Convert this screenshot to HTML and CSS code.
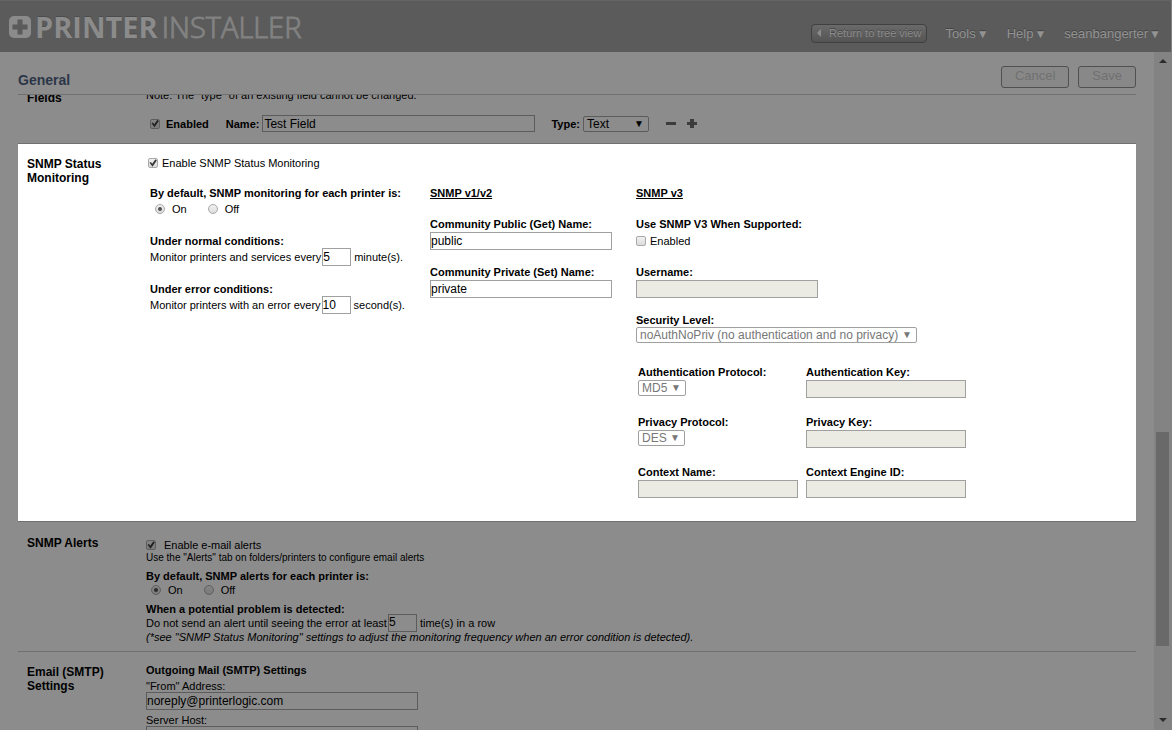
FILE: index.html
```html
<!DOCTYPE html>
<html lang="en">
<head>
<meta charset="utf-8">
<title>Printer Installer - General</title>
<link rel="stylesheet" href="styles.css">
</head>
<body>
<header class="topbar">
  <div class="logo">
    <svg class="logo-mark" viewBox="0 0 22 22" aria-hidden="true">
      <rect width="22" height="22" rx="5" fill="#8b8b8b"/>
      <path d="M8.5 3.5h5v5h5v5h-5v5h-5v-5h-5v-5h5z" fill="#5b5b5b"/>
    </svg>
    <span class="logo-text"><b>PRINTER</b><span class="logo-light">INSTALLER</span></span>
  </div>
  <nav class="topnav">
    <button class="tree-btn" type="button">
      <svg class="back-icon" viewBox="0 0 4 8" aria-hidden="true"><path d="M4 0v8L0 4z" fill="#8c8c8c"/></svg>
      Return to tree view
    </button>
    <a class="menu" href="#">Tools <i>▼</i></a>
    <a class="menu" href="#">Help <i>▼</i></a>
    <a class="menu" href="#">seanbangerter <i>▼</i></a>
  </nav>
</header>
<div class="page">
  <main class="main">
    <div class="page-head">
      <h1>General</h1>
      <div class="actions">
        <button class="action" type="button" disabled>Cancel</button>
        <button class="action" type="button" disabled>Save</button>
      </div>
    </div>
    <div class="sections">
      <section class="section fields">
        <h2>Fields</h2>
        <div class="content">
          <p>Note: The "type" of an existing field cannot be changed.</p>
          <div class="field-row">
            <label class="enabled"><input type="checkbox" checked>Enabled</label>
            <label for="fname">Name:</label>
            <input class="text name-input" id="fname" type="text" value="Test Field">
            <label class="type-label" for="ftype">Type:</label>
            <span class="select type-select"><select id="ftype"><option>Text</option></select><i>▼</i></span>
            <button class="icon-btn minus" type="button" aria-label="Remove field"><svg viewBox="0 0 10 10"><path d="M0 3h10v3H0z" fill="#3c3c3c"/></svg></button>
            <button class="icon-btn" type="button" aria-label="Add field"><svg viewBox="0 0 10 10"><path d="M3 0h4v3h3v3H7v3H3V6H0V3h3z" fill="#3c3c3c"/></svg></button>
          </div>
        </div>
      </section>

      <section class="section status">
        <h2>SNMP Status Monitoring</h2>
        <div class="content">
          <label class="check status-check"><input type="checkbox" checked>Enable SNMP Status Monitoring</label>
          <div class="columns">
            <div class="col">
              <h3>By default, SNMP monitoring for each printer is:</h3>
              <div class="radios">
                <label><input type="radio" name="mon" checked>On</label>
                <label><input type="radio" name="mon">Off</label>
              </div>
              <div class="interval">
                <h3>Under normal conditions:</h3>
                <div class="inline"><label for="norm">Monitor printers and services every</label><input class="text num" id="norm" type="text" value="5"><span>minute(s).</span></div>
              </div>
              <div class="interval">
                <h3>Under error conditions:</h3>
                <div class="inline"><label for="err">Monitor printers with an error every</label><input class="text num" id="err" type="text" value="10"><span>second(s).</span></div>
              </div>
            </div>
            <div class="col stack">
              <h3 class="under">SNMP v1/v2</h3>
              <div class="field"><label for="get">Community Public (Get) Name:</label><input class="text mid" id="get" type="text" value="public"></div>
              <div class="field"><label for="set">Community Private (Set) Name:</label><input class="text mid" id="set" type="text" value="private"></div>
            </div>
            <div class="col stack">
              <h3 class="under">SNMP v3</h3>
              <div class="field">
                <h3>Use SNMP V3 When Supported:</h3>
                <label class="check v3-check"><input type="checkbox">Enabled</label>
              </div>
              <div class="field"><label for="user">Username:</label><input class="text mid" id="user" type="text" disabled></div>
              <div class="field"><label for="sec">Security Level:</label>
                <span class="select"><select id="sec" disabled><option>noAuthNoPriv (no authentication and no privacy)</option></select><i>▼</i></span></div>
              <div class="pairs">
                <div class="field"><label for="ap">Authentication Protocol:</label><span class="select"><select id="ap" disabled><option>MD5</option></select><i>▼</i></span></div>
                <div class="field"><label for="ak">Authentication Key:</label><input class="text" id="ak" type="text" disabled></div>
                <div class="field"><label for="pp">Privacy Protocol:</label><span class="select"><select id="pp" disabled><option>DES</option></select><i>▼</i></span></div>
                <div class="field"><label for="pk">Privacy Key:</label><input class="text" id="pk" type="text" disabled></div>
                <div class="field"><label for="cn">Context Name:</label><input class="text" id="cn" type="text" disabled></div>
                <div class="field"><label for="ce">Context Engine ID:</label><input class="text" id="ce" type="text" disabled></div>
              </div>
            </div>
          </div>
        </div>
      </section>

      <section class="section alerts">
        <h2>SNMP Alerts</h2>
        <div class="content">
          <label class="check alert-check"><input type="checkbox" checked>Enable e-mail alerts</label>
          <p class="small">Use the "Alerts" tab on folders/printers to configure email alerts</p>
          <h3>By default, SNMP alerts for each printer is:</h3>
          <div class="radios">
            <label><input type="radio" name="al" checked>On</label>
            <label><input type="radio" name="al">Off</label>
          </div>
          <h3>When a potential problem is detected:</h3>
          <div class="inline"><label for="times">Do not send an alert until seeing the error at least</label><input class="text num" id="times" type="text" value="5"><span>time(s) in a row</span></div>
          <p class="note">(*see "SNMP Status Monitoring" settings to adjust the monitoring frequency when an error condition is detected).</p>
        </div>
      </section>

      <section class="section email">
        <h2>Email (SMTP) Settings</h2>
        <div class="content">
          <h3>Outgoing Mail (SMTP) Settings</h3>
          <div class="mail"><label for="from">"From" Address:</label><input class="text" id="from" type="text" value="noreply@printerlogic.com"></div>
          <div class="mail"><label for="host">Server Host:</label><input class="text" id="host" type="text"></div>
        </div>
      </section>
    </div>
  </main>
  <div class="scrollbar" aria-hidden="true">
    <svg class="arrow" viewBox="0 0 8 4"><path d="M4 0l4 4H0z" fill="#2c2c2c"/></svg>
    <div class="track"><div class="before"></div><div class="thumb"></div><div class="after"></div></div>
    <svg class="arrow" viewBox="0 0 8 4"><path d="M4 4l4-4H0z" fill="#2c2c2c"/></svg>
  </div>
</div>
</body>
</html>
```

FILE: styles.css
```css
* { box-sizing: border-box; }

:root {
  --dim: #8c8c8c;
  --line: #707070;
  --field-border: #5c5c5c;
}

body {
  margin: 0;
  height: 100vh;
  display: flex;
  flex-direction: column;
  overflow: hidden;
  background: var(--dim);
  color: #000;
  font: 11px/14px "Liberation Sans", Arial, sans-serif;
}

h1, h2, h3, p { margin: 0; }
h2 { font-size: 12px; line-height: 14px; }
h3 { font-size: 11px; line-height: 14px; }
input, select, button { font-family: inherit; margin: 0; }

/* Top bar */
.topbar {
  flex: none;
  height: 52px;
  display: flex;
  justify-content: space-between;
  padding: 0 10px 0 9px;
  background: #5b5b5b;
  border-top: 1px solid #646464;
  border-right: 1px solid #808080;
}
.logo { display: flex; align-items: center; gap: 4px; }
.logo-mark { width: 22px; height: 22px; }
.logo-text {
  display: flex;
  gap: 4px;
  color: #8b8b8b;
  font: 29px/40px "Open Sans", "Noto Sans", sans-serif;
  text-shadow: 0 -1px 0 #4c4c4c;
}
.logo-light { font-weight: 300; -webkit-text-stroke: 1px #808080; text-shadow: none; }
.topnav { display: flex; align-items: center; gap: 18px; padding-top: 15px; }
.tree-btn {
  display: flex;
  align-items: center;
  gap: 8px;
  height: 19px;
  margin-bottom: 2px;
  padding: 0 5px;
  border: 1px solid #404040;
  border-radius: 4px;
  background: linear-gradient(#6a6a6a, #545454);
  color: #8c8c8c;
  font-size: 11px;
  text-shadow: 0 -1px 0 #444;
}
.back-icon { width: 4px; height: 8px; }
.menu {
  display: flex;
  align-items: center;
  gap: 1px;
  color: #939393;
  font-size: 13px;
  line-height: 16px;
  text-decoration: none;
  text-shadow: 0 -1px 0 #444;
}
.menu i { font-size: 12px; font-style: normal; line-height: 16px; }

/* Page frame */
.page { flex: 1; min-height: 0; display: flex; }
.main {
  flex: 1;
  min-width: 0;
  display: flex;
  flex-direction: column;
  padding: 0 18px;
}
.page-head {
  flex: none;
  height: 43px;
  display: flex;
  justify-content: space-between;
  border-bottom: 1px solid var(--line);
}
h1 { padding-top: 20px; color: #2b3648; font-size: 14px; line-height: 16px; }
.actions { display: flex; gap: 9px; padding-top: 14px; }
.action {
  height: 22px;
  padding: 0 13px 3px;
  border: 1px solid #505050;
  border-radius: 3px;
  background: #888;
  color: #707070;
  font-size: 13px;
  line-height: 16px;
}
.sections { flex: 1; min-height: 0; overflow: hidden; }
.section {
  display: grid;
  grid-template-columns: 128px 1fr;
  border-bottom: 1px solid var(--line);
}
.section h2 { padding: 0 20px 0 9px; }

/* Controls */
.text {
  height: 18px;
  padding: 0 0 1px;
  border: 1px solid var(--field-border);
  background: transparent;
  color: #000;
  font-size: 12px;
}
input[type="checkbox"], input[type="radio"] {
  appearance: none;
  flex: none;
  display: grid;
  place-items: center;
  width: 10px;
  height: 10px;
  border: 1px solid #5f5f5f;
  border-radius: 2px;
  background: linear-gradient(#858585, #7a7a7a);
}
input[type="radio"] { border-radius: 50%; }
input[type="checkbox"]:checked::before {
  content: "";
  width: 8px;
  height: 8px;
  background: #222;
  clip-path: polygon(6% 48%, 24% 36%, 40% 58%, 80% 4%, 98% 18%, 44% 96%);
}
input[type="radio"]:checked::before {
  content: "";
  width: 4px;
  height: 4px;
  border-radius: 50%;
  background: #2c2c2c;
}
.select { display: inline-grid; align-items: center; justify-self: start; }
.select select, .select i { grid-area: 1 / 1; }
.select select {
  appearance: none;
  height: 16px;
  padding: 0 17px 0 3px;
  border: 1px solid var(--field-border);
  border-radius: 2px;
  background: transparent;
  color: #000;
  font-size: 12px;
  line-height: 14px;
  opacity: 1;
}
.select i {
  justify-self: end;
  padding-right: 5px;
  font-size: 10px;
  font-style: normal;
  line-height: 12px;
  pointer-events: none;
}
.check { display: flex; align-items: center; gap: 4px; }
.radios { display: flex; gap: 21px; padding-left: 5px; }
.radios label { display: flex; align-items: center; gap: 7px; line-height: 18px; }
.inline { display: flex; align-items: center; gap: 1px; }
.inline span { padding-left: 2px; }
.num { width: 29px; }

/* Custom fields */
.fields { height: 49px; }
.fields h2 { margin-top: -4px; }
.fields p { margin-top: -7px; }
.field-row { display: flex; align-items: center; margin-top: 13px; padding-left: 4px; font-weight: bold; }
.field-row .text { height: 17px; padding: 0 1px; }
.enabled { display: flex; align-items: center; gap: 6px; margin-right: 17px; }
.name-input { width: 273px; margin-left: 3px; }
.type-label { margin: 0 3px 0 16px; }
.type-select { width: 66px; font-weight: normal; }
.icon-btn { display: flex; padding: 0; border: 0; background: none; }
.icon-btn svg { width: 10px; height: 10px; }
.minus { margin: 0 11px 0 17px; }

/* Status monitoring */
.status {
  --field-border: #a0a0a0;
  padding: 12px 0 23px;
  background: #fff;
}
.status h2 { padding-top: 1px; }
.status input[type="checkbox"], .status input[type="radio"] {
  border-color: #a8a8a8;
  background: linear-gradient(#f0f0f0, #dcdcdc);
}
.status input[type="checkbox"]:checked::before { background: #3a3a3a; }
.status input[type="radio"]:checked::before { background: #505050; }
.status .text:disabled { background: #ebebe4; }
.status .select { color: #777; }
.status select:disabled { color: #777; }
.status-check { padding-left: 2px; line-height: 14px; }
.columns {
  display: grid;
  grid-template-columns: 280px 206px 1fr;
  margin-top: 16px;
  padding-left: 4px;
}
.interval { margin-top: 16px; }
.interval .inline { height: 18px; }
.under { padding-bottom: 2px; text-decoration: underline; }
.stack { display: flex; flex-direction: column; align-items: flex-start; gap: 15px; }
.field { display: grid; }
.field label { font-weight: bold; line-height: 14px; }
.field label.check { height: 19px; font-weight: normal; }
.field .text { margin-top: 1px; }
.mid { width: 182px; }
.pairs {
  display: grid;
  grid-template-columns: 160px 160px;
  gap: 17px 8px;
  padding: 7px 0 0 2px;
}
.pairs .field { align-content: start; }
.pairs .select { margin-top: 1px; }
.pairs .text { width: 100%; }

/* Alerts */
.alerts { padding: 14px 0 6px; }
.alert-check { gap: 8px; padding-top: 2px; }
.small { font-size: 10px; line-height: 12px; }
.alerts h3 { padding-top: 5px; line-height: 14px; }
.alerts .radios label { line-height: 14px; }
.alerts .inline { height: 13px; }
.note { font-style: italic; line-height: 16px; }

/* Mail */
.email { padding: 11px 0; border-bottom: 0; }
.email h2 { padding-top: 2px; }
.email h3 { padding-bottom: 3px; line-height: 14px; }
.mail { display: grid; width: 272px; margin-bottom: 4px; line-height: 12px; }

/* Scrollbar */
.scrollbar {
  flex: none;
  width: 18px;
  display: flex;
  flex-direction: column;
  align-items: center;
  padding: 7px 1px 8px 0;
  background: #838383;
}
.arrow { flex: none; width: 8px; height: 4px; }
.track { flex: 1; display: flex; flex-direction: column; width: 13px; }
.before { flex: 369; }
.thumb { flex: 214; background: #696969; }
.after { flex: 72; }
```
